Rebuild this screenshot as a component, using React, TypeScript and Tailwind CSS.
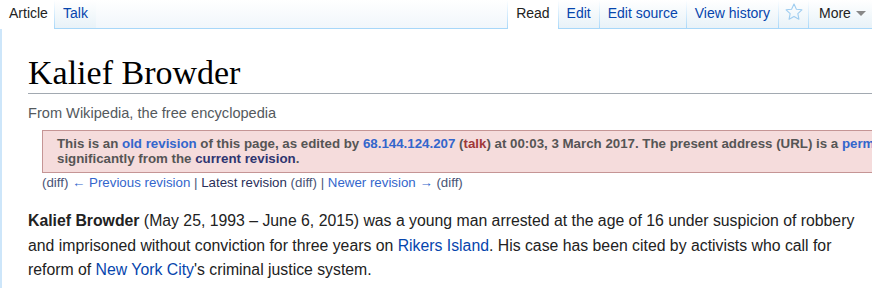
import React from "react";

function Sep() {
  return <div className="w-px self-stretch bg-gradient-to-b from-white to-[#a7d7f9]" />;
}

function Tab({ label, selected = false, link = true }: { label: string; selected?: boolean; link?: boolean }) {
  return (
    <div
      className={
        "flex items-start pt-[4px] px-[8px] text-[14px] leading-[18px] " +
        (selected
          ? "bg-white text-[#222]"
          : "bg-gradient-to-b from-white to-[#e8f2f8] border-b border-[#a7d7f9] " + (link ? "text-[#0645ad]" : "text-[#222]"))
      }
    >
      {label}
    </div>
  );
}

export default function App() {
  return (
    <div className="w-[872px] h-[288px] overflow-hidden bg-white font-['Liberation_Sans',Arial,sans-serif]">
      {/* tab bar */}
      <div className="flex h-[29px]">
        <div className="w-[54px] bg-white pl-[9px] pt-[4px] text-[14px] leading-[18px] text-[#222]">Article</div>
        <Sep />
        <Tab label="Talk" />
        <div className="flex-1 bg-gradient-to-b from-white to-[#f1f6fb] border-b border-[#a7d7f9]" />
        <Sep />
        <Tab label="Read" selected />
        <Sep />
        <Tab label="Edit" />
        <Sep />
        <Tab label="Edit source" />
        <Sep />
        <Tab label="View history" />
        <Sep />
        <div className="w-[29px] flex items-start justify-center pt-[2px] bg-gradient-to-b from-white to-[#e8f2f8] border-b border-[#a7d7f9]">
          <svg width="20" height="20" viewBox="0 0 24 24">
            <path
              d="M12 2.5l2.9 6.1 6.6.8-4.9 4.6 1.3 6.6L12 17.3l-5.9 3.3 1.3-6.6-4.9-4.6 6.6-.8z"
              fill="none"
              stroke="#9fcdf0"
              strokeWidth="1.3"
              strokeLinejoin="round"
            />
          </svg>
        </div>
        <Sep />
        <div className="w-[63px] flex items-start pt-[4px] pl-[10px] text-[14px] leading-[18px] text-[#222] bg-gradient-to-b from-white to-[#e8f2f8] border-b border-[#a7d7f9]">
          <span>More</span>
          <svg className="ml-[5px] mt-[7px] shrink-0" width="10" height="6" viewBox="0 0 10 6">
            <path d="M0 0h10L5 5z" fill="#888" />
          </svg>
        </div>
      </div>

      {/* content */}
      <div className="border-l-2 border-[#cde6fa] h-[259px] pl-[26px] pt-[24px]">
        <h1 className="font-['Liberation_Serif',Times,serif] text-[34px] leading-[40px] text-black whitespace-nowrap border-b border-[#a2a9b1]">
          Kalief Browder
        </h1>
        <div className="mt-[10px] text-[14.6px] leading-[18px] text-[#54595d]">From Wikipedia, the free encyclopedia</div>

        <div className="ml-[14px] mt-[8px] w-[900px] border border-[#c59595] bg-[#f5dcdc] pl-[14px] pt-[5px] pb-[6px] text-[13.3px] leading-[15px] font-bold text-[#555] whitespace-nowrap">
          This is an <span className="text-[#3366cc]">old revision</span> of this page, as edited by{" "}
          <span className="text-[#3366cc]">68.144.124.207</span> (<span className="text-[#a03838]">talk</span>) at 00:03, 3 March
          2017. The present address (URL) is a <span className="text-[#3366cc]">permanent link</span> to this revision, which may differ
          <br />
          significantly from the <span className="text-[#2f3570]">current revision</span>.
        </div>

        <div className="ml-[14px] mt-[1px] text-[13.3px] leading-[18px] text-[#4a5577] whitespace-nowrap">
          (diff) <span className="text-[#3366cc]">← Previous revision</span> | <span className="text-[#2a2f5a]">Latest revision</span>{" "}
          (diff) | <span className="text-[#3366cc]">Newer revision →</span> (diff)
        </div>

        <p className="mt-[17px] text-[15.8px] leading-[24.5px] text-[#222] whitespace-nowrap">
          <b>Kalief Browder</b> (May 25, 1993 – June 6, 2015) was a young man arrested at the age of 16 under suspicion of robbery
          <br />
          and imprisoned without conviction for three years on <span className="text-[#0645ad]">Rikers Island</span>. His case has been
          cited by activists who call for
          <br />
          reform of <span className="text-[#0645ad]">New York City</span>'s criminal justice system.
        </p>
      </div>
    </div>
  );
}
